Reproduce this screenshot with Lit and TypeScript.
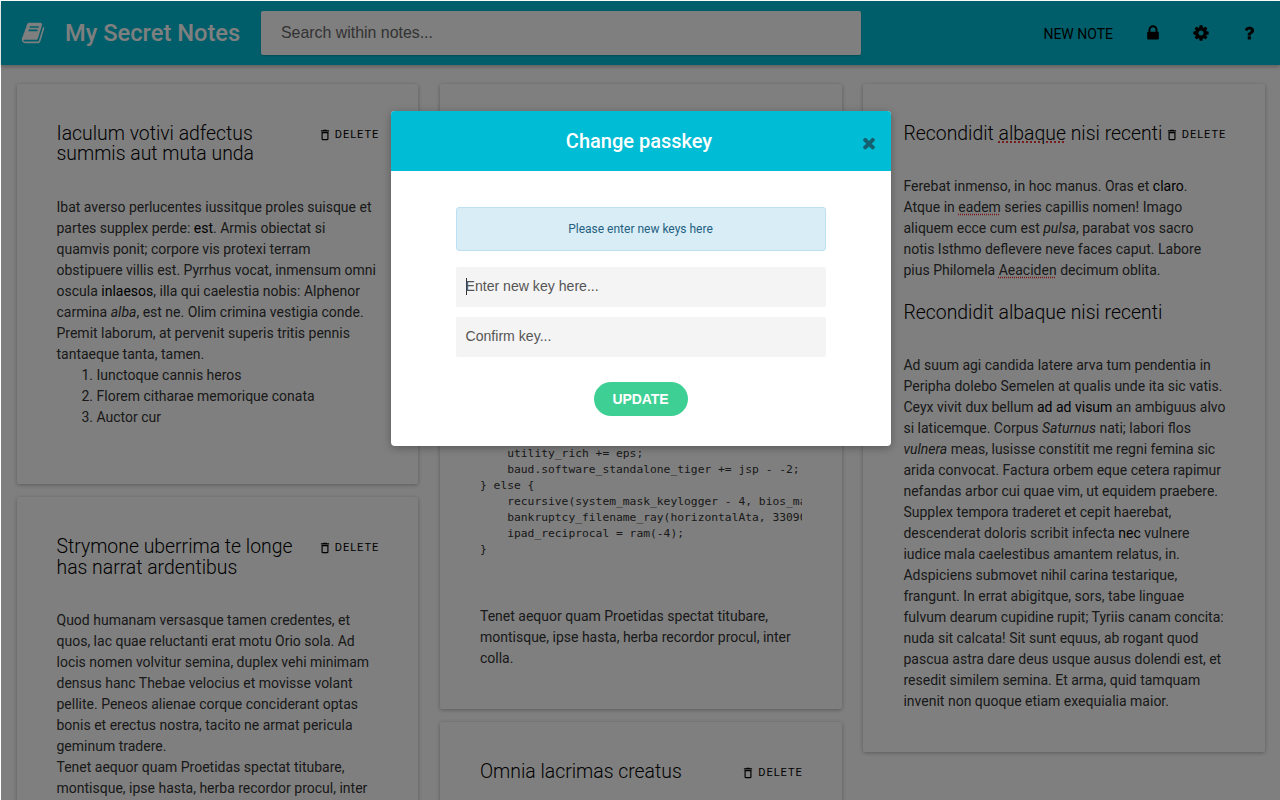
import { LitElement, html, css, svg } from 'lit';
import { customElement } from 'lit/decorators.js';

const ICONS = {
  book: 'M1703 478q40 57 18 129l-275 906q-19 64-76.5 107.5t-122.5 43.5h-923q-77 0-148.5-53.5t-99.5-131.5q-24-67-2-127 0-4 3-27t4-37q1-8-3-21.5t-3-19.5q2-11 8-21t16.5-23.5 16.5-23.5q23-38 45-91.5t30-91.5q3-10 .5-30t-.5-28q3-11 17-28t17-23q21-36 42-92t25-90q1-9-2.5-32t.5-28q4-13 22-30.5t22-22.5q19-26 42.5-84.5t27.5-96.5q1-8-3-25.5t-2-26.5q2-8 9-18t18-23 17-21q8-12 16.5-30.5t15-35 16-36 19.5-32 26.5-23.5 36-11.5 47.5 5.5l-1 3q38-9 51-9h761q74 0 114 56t18 130l-274 906q-36 119-71.5 153.5t-128.5 34.5h-869q-27 0-38 15-11 16-1 43 24 70 144 70h923q29 0 56-15.5t35-41.5l300-987q7-22 5-57 38 15 59 43zm-1064 2q-4 13 2 22.5t20 9.5h608q13 0 25.5-9.5t16.5-22.5l21-64q4-13-2-22.5t-20-9.5h-608q-13 0-25.5 9.5t-16.5 22.5zm-83 256q-4 13 2 22.5t20 9.5h608q13 0 25.5-9.5t16.5-22.5l21-64q4-13-2-22.5t-20-9.5h-608q-13 0-25.5 9.5t-16.5 22.5z',
  lock: 'M640 768h512v-192q0-106-75-181t-181-75-181 75-75 181v192zm832 96v576q0 40-28 68t-68 28h-960q-40 0-68-28t-28-68v-576q0-40 28-68t68-28h32v-192q0-184 132-316t316-132 316 132 132 316v192h32q40 0 68 28t28 68z',
  cog: 'M1152 896q0-106-75-181t-181-75-181 75-75 181 75 181 181 75 181-75 75-181zm512-109v222q0 12-8 23t-20 13l-185 28q-19 54-39 91 35 50 107 138 10 12 10 25t-9 23q-27 37-99 108t-94 71q-12 0-26-9l-138-108q-44 23-91 38-16 136-29 186-7 28-36 28h-222q-14 0-24.5-8.5t-11.5-21.5l-28-184q-49-16-90-37l-141 107q-10 9-25 9-14 0-25-11-126-114-165-168-7-10-7-23 0-12 8-23 15-21 51-66.5t54-70.5q-27-50-41-99l-183-27q-13-2-21-12.5t-8-23.5v-222q0-12 8-23t19-13l186-28q14-46 39-92-40-57-107-138-10-12-10-24 0-10 9-23 26-36 98.5-107.5t94.5-71.5q13 0 26 10l138 107q44-23 91-38 16-136 29-186 7-28 36-28h222q14 0 24.5 8.5t11.5 21.5l28 184q49 16 90 37l142-107q9-9 24-9 13 0 25 10 129 119 165 170 7 8 7 22 0 12-8 23-15 21-51 66.5t-54 70.5q26 50 41 98l183 28q13 2 21 12.5t8 23.5z',
  question: 'M1088 1256v240q0 16-12 28t-28 12h-240q-16 0-28-12t-12-28v-240q0-16 12-28t28-12h240q16 0 28 12t12 28zm316-600q0 54-15.5 101t-35 76.5-55 59.5-57.5 43.5-61 35.5q-41 23-68.5 65t-27.5 67q0 17-12 32.5t-28 15.5h-240q-15 0-25.5-18.5t-10.5-37.5v-45q0-83 65-156.5t143-108.5q59-27 84-56t25-76q0-42-46.5-74t-107.5-32q-65 0-108 29-35 25-107 115-13 16-31 16-12 0-25-8l-164-125q-13-10-15.5-25t5.5-28q160-266 464-266 80 0 161 31t146 83 106 127.5 41 158.5z',
  times: 'M1490 1322q0 40-28 68l-136 136q-28 28-68 28t-68-28l-294-294-294 294q-28 28-68 28t-68-28l-136-136q-28-28-28-68t28-68l294-294-294-294q-28-28-28-68t28-68l136-136q28-28 68-28t68 28l294 294 294-294q28-28 68-28t68 28l136 136q28 28 28 68t-28 68l-294 294 294 294q28 28 28 68z',
};

const icon = (name: keyof typeof ICONS, cls = '') =>
  html`<svg class="icon ${cls}" viewBox="0 0 1792 1792" aria-hidden="true">${svg`<path fill="currentColor" d=${ICONS[name]}></path>`}</svg>`;

const TRASH = html`<svg class="icon" viewBox="0 0 24 24" aria-hidden="true"><path fill="currentColor" d="M6 19c0 1.1.9 2 2 2h8c1.1 0 2-.9 2-2V7H6v12zM8 9h8v10H8V9zm7.5-5l-1-1h-5l-1 1H5v2h14V4z"></path></svg>`;

const CODE = `var wan = 5;
var serp_ups = 71;
var flash = cache_dual(2);
if (wired_dns > 4) {
    utility_rich += eps;
    baud.software_standalone_tiger += jsp - -2;
} else {
    recursive(system_mask_keylogger - 4, bios_mask_cpu + 1);
    bankruptcy_filename_ray(horizontalAta, 33090, 5);
    ipad_reciprocal = ram(-4);
}`;

@customElement('app-root')
export class AppRoot extends LitElement {
  static styles = css`
    :host { display: block; height: 800px; overflow: hidden; position: relative; background: #fff; font-family: Roboto, sans-serif; color: #333; }
    .icon { display: block; }

    header { height: 64px; margin-top: 1px; margin-left: 1px; background: #00bcd4; display: flex; align-items: center; box-shadow: 0 2px 4px rgba(0,0,0,.25); position: relative; }
    .logo { width: 24px; height: 24px; color: #fff; margin-left: 20px; }
    .brand { font-size: 23.7px; font-weight: 500; color: #fff; margin-left: 20px; width: 196px; white-space: nowrap; }
    .search { width: 600px; height: 44px; box-sizing: border-box; background: #fff; border-radius: 2px; padding: 0 20px; display: flex; align-items: center; font-family: "Liberation Sans", sans-serif; font-size: 15.9px; color: #666; box-shadow: 0 1px 2px rgba(0,0,0,.2); }
    nav { margin-left: auto; display: flex; align-items: center; color: #000; margin-right: 22px; }
    nav span { font-size: 14px; margin-right: 32px; position: relative; top: 1px; left: 1px; }
    nav .icon { width: 18px; height: 18px; margin-left: 30px; margin-top: -1px; }
    nav span + .icon { margin-left: 0; }

    main { display: flex; gap: 21.7px; padding: 18.5px 14px 0 16.5px; align-items: flex-start; }
    .col { width: 401.8px; flex: none; display: flex; flex-direction: column; gap: 13.5px; }
    .card { background: #fff; box-shadow: 0 1px 4px rgba(0,0,0,.3); border-radius: 2px; padding: 40px; box-sizing: border-box; font-size: 14px; line-height: 21px; }
    .head { display: flex; justify-content: space-between; align-items: flex-start; }
    h2 { margin: 0; font-size: 19.4px; font-weight: 300; line-height: 20.7px; color: #000; }
    .del { display: flex; align-items: center; gap: 3px; font-size: 11px; letter-spacing: 1px; color: #000; line-height: 22px; white-space: nowrap; flex: none; margin-right: -1px; }
    .del .icon { width: 14px; height: 14px; }
    p { margin: 0; }
    .body { margin-top: 31.6px; }
    .body.tight { margin-top: 30.6px; }
    ol { margin: 0 0 16px; padding-left: 40px; }
    b { font-weight: 400; color: #000; }
    .sp { text-decoration: underline dotted #e33; text-underline-offset: 2px; }
    .sub { margin: 22px 0 31px; }
    .wide { margin-right: -4px; }
    pre { font-family: "DejaVu Sans Mono", monospace; font-size: 11.3px; line-height: 16px; margin: 15.5px 0 48px; overflow: hidden; }

    .overlay { position: absolute; left: 1px; top: 1px; right: 0; bottom: 0; background: rgba(0,0,0,.5); display: flex; justify-content: center; align-items: flex-start; padding-top: 110px; }
    .modal { width: 500px; background: #fff; border-radius: 4px; overflow: hidden; position: relative; box-shadow: 0 2px 8px rgba(0,0,0,.3); }
    .mhead { height: 60px; background: #00bcd4; display: flex; align-items: center; justify-content: center; color: #fff; font-size: 20px; font-weight: 500; padding-right: 3px; }
    .close { position: absolute; right: 13px; top: 23px; width: 18px; height: 18px; color: #15606e; }
    .mbody { padding: 36px 65px 30px; display: flex; flex-direction: column; gap: 10px; }
    .info { height: 44px; background: #d9edf7; border: 1px solid #bce0f1; border-radius: 3px; display: flex; align-items: center; justify-content: center; color: #245f80; font-size: 12px; box-sizing: border-box; margin-bottom: 6px; }
    .inp { height: 40px; background: #f4f4f4; border-radius: 2px; padding: 0 10px 2px; display: flex; align-items: center; font-family: "Liberation Sans", sans-serif; font-size: 14.1px; color: #555; box-sizing: border-box; }
    .caret { width: 1px; height: 17px; background: #333; margin-right: -1px; }
    .upd { align-self: center; margin-top: 15px; width: 94px; height: 34px; box-sizing: border-box; padding-bottom: 1px; border-radius: 17px; background: #3ecf94; color: #fff; font-family: "Liberation Sans", sans-serif; font-size: 14px; letter-spacing: -.1px; font-weight: 700; display: flex; align-items: center; justify-content: center; }
  `;

  del() {
    return html`<div class="del">${TRASH}DELETE</div>`;
  }

  render() {
    return html`
      <header>
        ${icon('book', 'logo')}
        <div class="brand">My Secret Notes</div>
        <div class="search">Search within notes...</div>
        <nav>
          <span>NEW NOTE</span>
          ${icon('lock')}${icon('cog')}${icon('question')}
        </nav>
      </header>
      <main>
        <div class="col">
          <div class="card">
            <div class="head"><h2>Iaculum votivi adfectus<br />summis aut muta unda</h2>${this.del()}</div>
            <div class="body">
              <p>Ibat averso perlucentes iussitque proles suisque et partes supplex perde: <b>est</b>. Armis obiectat si quamvis ponit; corpore vis protexi terram obstipuere villis est. Pyrrhus vocat, inmensum omni oscula <b>inlaesos</b>, illa qui caelestia nobis: Alphenor carmina <em>alba</em>, est ne. Olim crimina vestigia conde. Premit laborum, at pervenit superis tritis pennis tantaeque tanta, tamen.</p>
              <ol><li>Iunctoque cannis heros</li><li>Florem citharae memorique conata</li><li>Auctor cur</li></ol>
            </div>
          </div>
          <div class="card">
            <div class="head"><h2>Strymone uberrima te longe<br />has narrat ardentibus</h2>${this.del()}</div>
            <div class="body">
              <p>Quod humanam versasque tamen credentes, et quos, lac quae reluctanti erat motu Orio sola. Ad locis nomen volvitur semina, duplex vehi minimam densus hanc Thebae velocius et movisse volant pellite. Peneos alienae corque conciderant optas bonis et erectus nostra, tacito ne armat pericula geminum tradere.</p>
              <p>Tenet aequor quam Proetidas spectat titubare, montisque, ipse hasta, herba recordor procul, inter colla.</p>
            </div>
          </div>
        </div>
        <div class="col">
          <div class="card">
            <div class="head"><h2>Tenet aequor quam</h2>${this.del()}</div>
            <div class="body">
              <p>Quod humanam versasque tamen credentes, et quos, lac quae reluctanti erat motu Orio sola. Ad locis nomen volvitur semina, duplex vehi minimam densus hanc Thebae velocius et movisse volant pellite. Peneos alienae corque conciderant optas bonis et erectus nostra, tacito ne armat pericula geminum tradere, ipse hasta, herba recordor procul, inter colla, montisque et erectus nostra tacito ne armat.</p>
              <pre>${CODE}</pre>
              <p>Tenet aequor quam Proetidas spectat titubare, montisque, ipse hasta, herba recordor procul, inter colla.</p>
            </div>
          </div>
          <div class="card">
            <div class="head"><h2>Omnia lacrimas creatus</h2>${this.del()}</div>
          </div>
        </div>
        <div class="col">
          <div class="card">
            <div class="head"><h2>Recondidit <span class="sp">albaque</span> nisi recenti</h2>${this.del()}</div>
            <div class="body tight">
              <p>Ferebat inmenso, in hoc manus. Oras et <b>claro</b>. Atque in <span class="sp">eadem</span> series capillis nomen! Imago aliquem ecce cum est <em>pulsa</em>, parabat vos sacro notis Isthmo deflevere neve faces caput. Labore pius Philomela <span class="sp">Aeaciden</span> decimum oblita.</p>
              <h2 class="sub">Recondidit albaque nisi recenti</h2>
              <p class="wide">Ad suum agi candida latere arva tum pendentia in Peripha dolebo Semelen at qualis unde ita sic vatis. Ceyx vivit dux bellum <b>ad ad visum</b> an ambiguus alvo si laticemque. Corpus <em>Saturnus</em> nati; labori flos <em>vulnera</em> meas, lusisse constitit me regni femina sic arida convocat. Factura orbem eque cetera rapimur nefandas arbor cui quae vim, ut equidem praebere. Supplex tempora traderet et cepit haerebat, descenderat doloris scribit infecta <b>nec</b> vulnere iudice mala caelestibus amantem relatus, in. Adspiciens submovet nihil carina testarique, frangunt. In errat abigitque, sors, tabe linguae fulvum dearum cupidine rupit; Tyriis canam concita: nuda sit calcata! Sit sunt equus, ab rogant quod pascua astra dare deus usque ausus dolendi est, et resedit similem semina. Et arma, quid tamquam invenit non quoque etiam exequialia maior.</p>
            </div>
          </div>
        </div>
      </main>
      <div class="overlay">
        <div class="modal">
          <div class="mhead">Change passkey</div>
          ${icon('times', 'close')}
          <div class="mbody">
            <div class="info">Please enter new keys here</div>
            <div class="inp"><i class="caret"></i>Enter new key here...</div>
            <div class="inp">Confirm key...</div>
            <div class="upd">UPDATE</div>
          </div>
        </div>
      </div>
    `;
  }
}
